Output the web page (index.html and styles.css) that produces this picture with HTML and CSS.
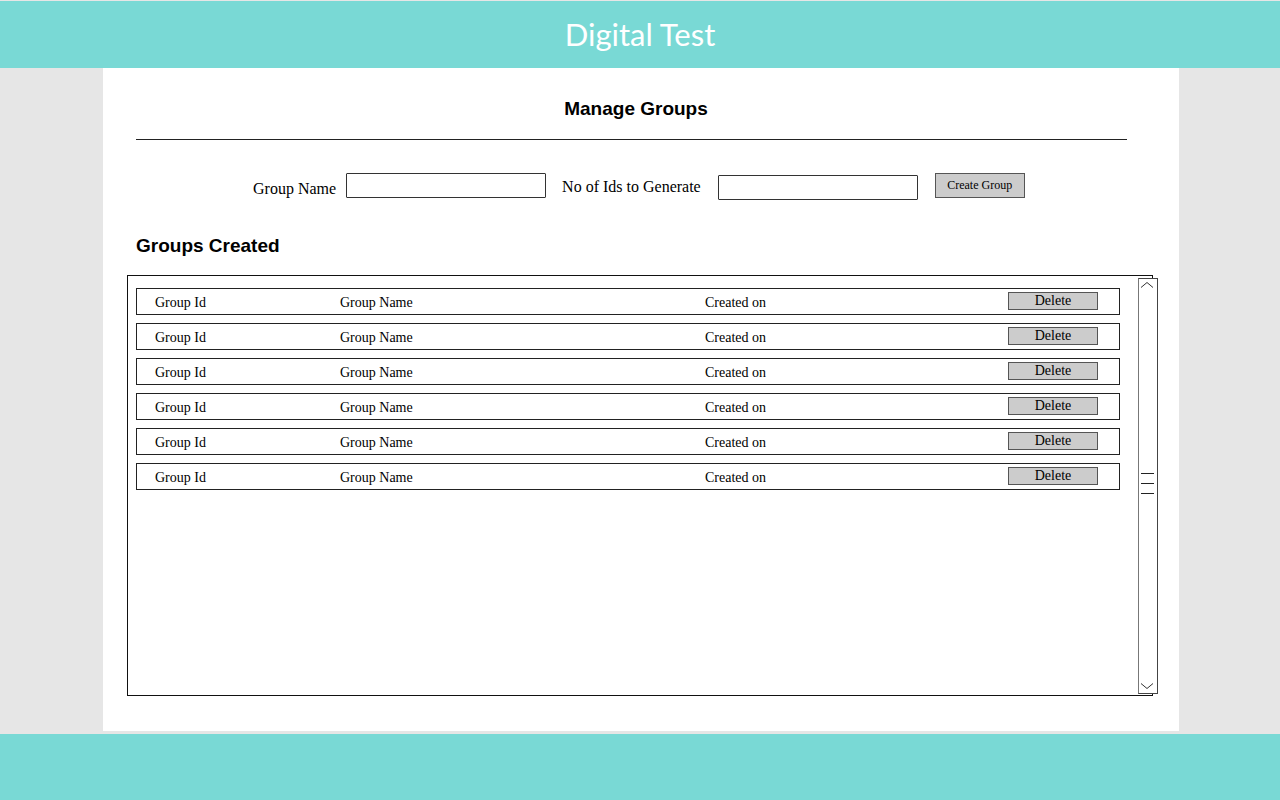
FILE: index.html
```html
<!DOCTYPE html>
<html>
<head>
<meta charset="utf-8">
<link rel="stylesheet" href="styles.css">
</head>
<body>
<header class="topbar"><h1 class="title">Digital Test</h1></header>
<main class="panel">
  <h2 class="page-title">Manage Groups</h2>
  <hr class="divider">
  <form class="create-form">
    <label class="lbl">Group Name</label>
    <span class="input"></span>
    <label class="lbl lbl-ids">No of Ids to Generate</label>
    <span class="input input-ids"></span>
    <span class="btn-create">Create Group</span>
  </form>
  <h3 class="section-title">Groups Created</h3>
  <div class="list-box">
    <div class="rows">
      <div class="row"><span class="c-id">Group Id</span><span class="c-name">Group Name</span><span class="c-date">Created on</span><span class="btn-del">Delete</span></div>
      <div class="row"><span class="c-id">Group Id</span><span class="c-name">Group Name</span><span class="c-date">Created on</span><span class="btn-del">Delete</span></div>
      <div class="row"><span class="c-id">Group Id</span><span class="c-name">Group Name</span><span class="c-date">Created on</span><span class="btn-del">Delete</span></div>
      <div class="row"><span class="c-id">Group Id</span><span class="c-name">Group Name</span><span class="c-date">Created on</span><span class="btn-del">Delete</span></div>
      <div class="row"><span class="c-id">Group Id</span><span class="c-name">Group Name</span><span class="c-date">Created on</span><span class="btn-del">Delete</span></div>
      <div class="row"><span class="c-id">Group Id</span><span class="c-name">Group Name</span><span class="c-date">Created on</span><span class="btn-del">Delete</span></div>
    </div>
    <div class="scrollbar">
      <svg class="chev" width="14" height="8" viewBox="0 0 14 8"><path d="M1 6.5 L7 1.5 L13 6.5" fill="none" stroke="#333" stroke-width="1"/></svg>
      <div class="thumb"><span></span><span></span><span></span></div>
      <svg class="chev" width="14" height="8" viewBox="0 0 14 8"><path d="M1 1.5 L7 6.5 L13 1.5" fill="none" stroke="#333" stroke-width="1"/></svg>
    </div>
  </div>
</main>
<footer class="footer"></footer>
</body>
</html>
```
FILE: styles.css
```css
* { box-sizing: border-box; }
html, body { margin: 0; padding: 0; }
body {
  background: #e6e6e6;
  width: 1280px;
  height: 800px;
  overflow: hidden;
  display: flex;
  flex-direction: column;
  font-family: "Liberation Serif", "Times New Roman", serif;
  color: #000;
}
.topbar {
  margin-top: 1px;
  height: 67px;
  flex-shrink: 0;
  background: #79d9d5;
  display: flex;
  align-items: center;
  justify-content: center;
}
.title {
  margin: 0;
  font-family: Lato, "Open Sans", sans-serif;
  font-weight: 400;
  font-size: 31px;
  color: #fff;
  line-height: 1;
  padding-bottom: 1px;
}
.panel {
  margin: 0 0 0 103px;
  width: 1076px;
  height: 663px;
  flex-shrink: 0;
  background: #fff;
  padding: 0 0 0 33px;
  display: flex;
  flex-direction: column;
}
.page-title {
  margin: 30px 0 0 0;
  font-family: "Liberation Sans", Arial, sans-serif;
  font-weight: 700;
  font-size: 19px;
  line-height: 22px;
  text-align: center;
  width: 1000px;
}
.divider {
  margin: 19px 0 0 0;
  width: 991px;
  border: 0;
  border-top: 1px solid #222;
  height: 0;
}
.create-form {
  margin: 33px 0 0 117px;
  display: flex;
  align-items: flex-start;
  height: 28px;
}
.lbl {
  font-size: 16px;
  line-height: 18px;
  margin-top: 7px;
}
.input {
  display: block;
  width: 200px;
  height: 25px;
  border: 1px solid #333;
  border-radius: 1px;
  margin-left: 10px;
  background: #fff;
}
.lbl-ids { margin-left: 16px; margin-top: 5px; }
.input-ids { margin-left: 17px; margin-top: 2px; }
.btn-create {
  margin-left: 17px;
  width: 90px;
  height: 25px;
  border: 1px solid #555;
  background: #cccccc;
  font-size: 12px;
  line-height: 23px;
  text-align: center;
}
.section-title {
  margin: 34px 0 0 0;
  font-family: "Liberation Sans", Arial, sans-serif;
  font-weight: 700;
  font-size: 19px;
  line-height: 22px;
}
.list-box {
  margin: 18px 0 0 -9px;
  width: 1026px;
  height: 421px;
  border: 1px solid #111;
  display: flex;
  align-items: flex-start;
}
.rows {
  margin: 12px 0 0 8px;
  width: 984px;
  flex-shrink: 0;
  display: flex;
  flex-direction: column;
  gap: 8px;
}
.row {
  height: 27px;
  border: 1px solid #222;
  font-size: 14px;
  position: relative;
}
.c-id { position: absolute; left: 18px; top: 6px; }
.c-name { position: absolute; left: 203px; top: 6px; }
.c-date { position: absolute; left: 568px; top: 6px; }
.btn-del {
  position: absolute;
  left: 871px;
  top: 3px;
  width: 90px;
  height: 18px;
  border: 1px solid #555;
  background: #cccccc;
  text-align: center;
  line-height: 15px;
  font-size: 14px;
}
.scrollbar {
  margin: 2px 0 0 18px;
  width: 20px;
  height: 416px;
  flex-shrink: 0;
  background: #fff;
  border: 1px solid #444;
  border-left-color: #777;
  display: flex;
  flex-direction: column;
  align-items: flex-start;
  justify-content: space-between;
  padding: 2px 0 3px 1px;
}
.thumb {
  display: flex;
  flex-direction: column;
  gap: 9px;
  margin: 84px 0 88px 1px;
}
.thumb span {
  display: block;
  width: 13px;
  height: 1px;
  background: #222;
}
.footer {
  margin-top: 3px;
  height: 66px;
  flex-shrink: 0;
  background: #79d9d5;
}
```
